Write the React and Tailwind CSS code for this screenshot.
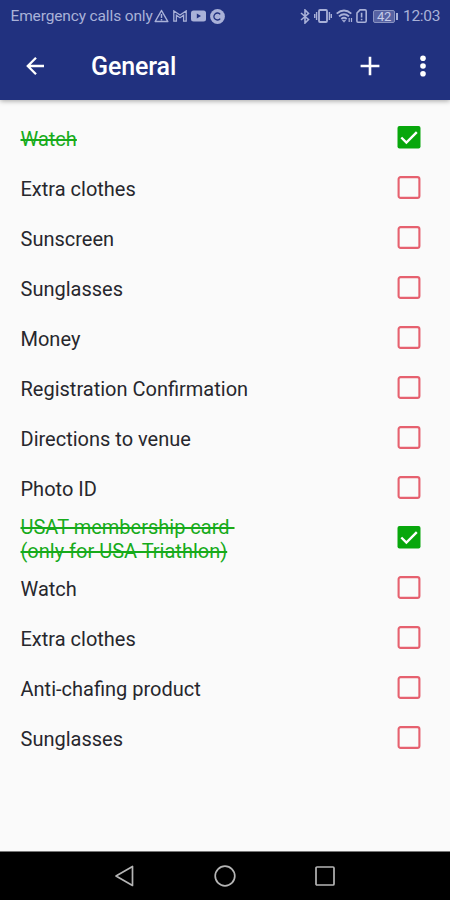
import React from "react";

const items = [
  { label: "Watch", done: true },
  { label: "Extra clothes" },
  { label: "Sunscreen" },
  { label: "Sunglasses" },
  { label: "Money" },
  { label: "Registration Confirmation" },
  { label: "Directions to venue" },
  { label: "Photo ID" },
  { label: "USAT membership card\u00a0\n(only for USA Triathlon)", done: true },
  { label: "Watch" },
  { label: "Extra clothes" },
  { label: "Anti-chafing product" },
  { label: "Sunglasses" },
];

function StatusBar() {
  return (
    <div className="flex h-8 items-center pl-[10.5px] pr-[10px] text-[#a9b1d8]">
      <span className="w-[142.5px] whitespace-nowrap text-[15.5px] leading-8 tracking-[-0.14px]">Emergency calls only</span>
      <svg className="ml-px h-[14px] w-[15px]" viewBox="0 0 15 14" fill="none" stroke="currentColor" strokeWidth="1.5">
        <path d="M7.5 1.5 L13.8 12.5 H1.2 Z" strokeLinejoin="round" />
        <path d="M7.5 5 V9 M7.5 10 V11.4" />
      </svg>
      <svg className="ml-[4px] h-[12px] w-[14px]" viewBox="0 0 14 12" fill="none" stroke="currentColor" strokeWidth="1.3">
        <path d="M.8 11.2 V.9 L7 5 L13.2 .9 V11.2 H10.6 V5.2 L7 7.8 L3.4 5.2 V11.2 Z" />
      </svg>
      <svg className="ml-[4px] h-[12px] w-[15px]" viewBox="0 0 15 12">
        <rect y=".5" width="15" height="11" rx="2.5" fill="currentColor" />
        <path d="M5.8 3.5 L10 6 L5.8 8.5 Z" fill="#21317f" />
      </svg>
      <svg className="ml-[4px] h-[15px] w-[15px]" viewBox="0 0 15 15">
        <circle cx="7.5" cy="7.5" r="7.4" fill="currentColor" />
        <path d="M10.2 5.4 A3.5 3.5 0 1 0 10.2 9.6" fill="none" stroke="#21317f" strokeWidth="1.3" />
      </svg>
      <div className="ml-auto flex items-center">
        <svg className="h-[15px] w-[10px]" viewBox="0 0 10 15" fill="none" stroke="currentColor" strokeWidth="1.6">
          <path d="M1 4 L8.5 10.5 L5 14 V1 L8.5 4.5 L1 11" />
        </svg>
        <svg className="ml-[4px] h-[14px] w-[18px]" viewBox="0 0 18 14" fill="none" stroke="currentColor" strokeWidth="1.8">
          <rect x="5" y="1" width="8" height="12" rx="1" />
          <path d="M2.6 3 V11 M15.4 3 V11 M.7 5 V9 M17.3 5 V9" strokeWidth="1.4" />
        </svg>
        <svg className="ml-[4px] h-[14px] w-[17px]" viewBox="0 0 17 14" fill="none" stroke="currentColor" strokeWidth="1.9">
          <path d="M.7 4.6 Q8 -1.8 15.3 4.6 M3 7.4 Q8 3 13 7.4 M5.3 10 Q8 7.7 10.7 10" />
          <path d="M8 13.3 L6.3 11.3 H9.7 Z" fill="currentColor" strokeWidth=".6" />
          <path d="M13.2 9 V13 M15.5 9 V13" strokeWidth="1.2" />
        </svg>
        <svg className="ml-[3px] h-[14px] w-[11px]" viewBox="0 0 11 14" fill="none" stroke="currentColor" strokeWidth="1.6">
          <path d="M1 4 L4 .9 H9 Q10.2 .9 10.2 2 V12 Q10.2 13.2 9 13.2 H2 Q.9 13.2 .9 12 Z" />
          <path d="M5.6 3.8 V8.6 M5.6 9.7 V11.2" />
        </svg>
        <div className="ml-[6px] flex items-center">
          <div className="flex h-[13px] w-[22px] items-center justify-center rounded-[2px] border border-[#8993c1] bg-[#5762a2] text-[13px] leading-none tracking-[-0.3px] text-[#c5cbea]">42</div>
          <div className="ml-px h-[7px] w-[2px] bg-[#a9b1d8]" />
        </div>
        <span className="ml-[5px] w-[37px] whitespace-nowrap text-[15.5px] leading-8 tracking-[-0.3px]">12:03</span>
      </div>
    </div>
  );
}

function AppBar() {
  return (
    <div className="flex h-[68px] items-center pb-[1px] text-white">
      <svg className="ml-[26px] h-[20px] w-[19px]" viewBox="0 0 19 20" fill="none" stroke="currentColor" strokeWidth="2.3">
        <path d="M18 10 H2 M10 1.8 L1.8 10 L10 18.2" />
      </svg>
      <h1 className="ml-[46px] pt-[2px] text-[25px] leading-8 font-medium tracking-[-0.1px]">General</h1>
      <svg className="ml-auto h-[20px] w-[20px]" viewBox="0 0 20 20" stroke="currentColor" strokeWidth="2.6">
        <path d="M10 .8 V19.2 M.6 10 H19.4" />
      </svg>
      <svg className="mr-[24px] ml-[40px] h-[22px] w-[6px]" viewBox="0 0 6 22" fill="currentColor">
        <circle cx="3" cy="3.2" r="2.8" />
        <circle cx="3" cy="11" r="2.8" />
        <circle cx="3" cy="18.8" r="2.8" />
      </svg>
    </div>
  );
}

function Checkbox({ checked }) {
  return checked ? (
    <svg className="mb-px h-[23px] w-[24px]" viewBox="0 0 24 23">
      <rect x=".5" width="23" height="22.5" rx="2" fill="#08a70c" />
      <path d="M4.3 11.5 L9.4 16.6 L19.8 6.2" fill="none" stroke="#fff" strokeWidth="2.4" />
    </svg>
  ) : (
    <svg className="mb-px h-[23px] w-[24px]" viewBox="0 0 24 23">
      <rect x="1.6" y="1.1" width="20.8" height="20.8" rx="2" fill="none" stroke="#e6616f" strokeWidth="2.1" />
    </svg>
  );
}

export default function App() {
  return (
    <div className="flex h-[900px] w-[450px] flex-col overflow-hidden bg-[#fafafa] font-[Roboto,sans-serif]">
      <header className="z-10 h-[100px] shrink-0 bg-[#21317f] shadow-[0_1px_5px_rgba(0,0,0,0.35)]">
        <StatusBar />
        <AppBar />
      </header>
      <main className="flex-1 pt-[13px]">
        <ul>
          {items.map((item, i) => (
            <li key={i} className="flex h-[50px] items-center justify-between pr-[29px] pl-[20.5px]">
              <span
                className={
                  item.done
                    ? "pt-[2px] text-[20px] leading-6 whitespace-pre text-[#17ab1b] line-through decoration-[1.5px]"
                    : "pt-[2px] text-[20px] leading-6 text-[#27272d]"
                }
              >
                {item.label}
              </span>
              <Checkbox checked={item.done} />
            </li>
          ))}
        </ul>
      </main>
      <nav className="flex h-[49px] shrink-0 items-center justify-center gap-[79px] border-t border-[#777] bg-black pr-[1px] pb-[1px]">
        <svg className="h-[22px] w-[21px]" viewBox="0 0 21 22" fill="none" stroke="#b5b5b5" strokeWidth="1.7">
          <path d="M18.5 1.5 V20.5 L2 11 Z" strokeLinejoin="round" />
        </svg>
        <svg className="h-[22px] w-[22px]" viewBox="0 0 22 22" fill="none" stroke="#b5b5b5" strokeWidth="1.7">
          <circle cx="11" cy="11" r="9.8" />
        </svg>
        <svg className="h-[22px] w-[20px]" viewBox="0 0 20 22" fill="none" stroke="#b5b5b5" strokeWidth="1.7">
          <rect x="1" y="2" width="18" height="18" rx="1" />
        </svg>
      </nav>
    </div>
  );
}
